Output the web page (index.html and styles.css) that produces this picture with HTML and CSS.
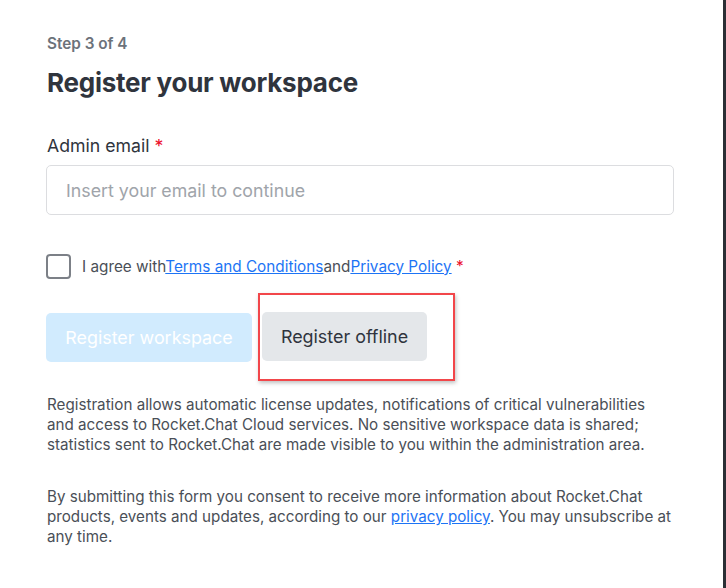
FILE: index.html
```html
<!DOCTYPE html>
<html>
<head>
<meta charset="utf-8">
<link rel="stylesheet" href="styles.css">
</head>
<body>
<div class="frame">
  <div class="form">
    <div class="step">Step 3 of 4</div>
    <h1 class="title">Register your workspace</h1>
    <label class="label">Admin email <span class="req">*</span></label>
    <div class="input">Insert your email to continue</div>
    <div class="agree">
      <span class="checkbox"></span>
      <span class="agree-text">I agree with<a class="link">Terms and Conditions</a>and<a class="link">Privacy Policy</a> <span class="req">*</span></span>
    </div>
    <div class="actions">
      <button class="btn btn-primary">Register workspace</button>
      <div class="highlight">
        <button class="btn btn-secondary">Register offline</button>
      </div>
    </div>
    <p class="text">Registration allows automatic license updates, notifications of critical vulnerabilities and access to Rocket.Chat Cloud services. No sensitive workspace data is shared; statistics sent to Rocket.Chat are made visible to you within the administration area.</p>
    <p class="text">By submitting this form you consent to receive more information about Rocket.Chat products, events and updates, according to our <a class="link">privacy policy</a>. You may unsubscribe at any time.</p>
  </div>
</div>
</body>
</html>
```
FILE: styles.css
```css
html, body {
  margin: 0;
  padding: 0;
  background: #ffffff;
}
body {
  font-family: Inter, "Noto Sans", sans-serif;
  color: #2f343d;
}
.frame {
  width: 723px;
  height: 588px;
  border-right: 3px solid #2b2f35;
  box-sizing: content-box;
  overflow: hidden;
}
.form {
  padding: 34px 52px 0 47px;
  width: 627px;
}
.step {
  font-size: 15.3px;
  line-height: 20px;
  font-weight: 600;
  color: #6c727a;
}
.title {
  margin: 11px 0 0;
  font-size: 26px;
  line-height: 36px;
  font-weight: 700;
  color: #2f343d;
  letter-spacing: -0.25px;
}
.label {
  display: block;
  margin-top: 33px;
  font-size: 17.7px;
  line-height: 24px;
  color: #2f343d;
}
.req {
  color: #ec0d2a;
}
.input {
  margin-top: 7px;
  height: 50px;
  box-sizing: border-box;
  border: 1px solid #dcdde0;
  border-radius: 5px;
  padding: 0 19px;
  display: flex;
  align-items: center;
  font-size: 17.8px;
  color: #a0a4aa;
  margin-left: -1px;
}
.agree {
  margin-top: 39px;
  display: flex;
  align-items: center;
  gap: 11px;
  margin-left: -1px;
}
.checkbox {
  width: 25px;
  height: 25px;
  box-sizing: border-box;
  border: 2px solid #7c8087;
  border-radius: 4px;
}
.agree-text {
  font-size: 15.3px;
  line-height: 20px;
  color: #4a4f57;
}
.link {
  color: #1d74f5;
  text-decoration: underline;
}
.actions {
  margin-top: 14px;
  display: flex;
  align-items: center;
  gap: 6px;
  margin-left: -1px;
}
.btn {
  font-family: inherit;
  font-size: 17.9px;
  height: 49px;
  border: none;
  border-radius: 5px;
  padding: 0 12px;
}
.btn-primary {
  background: #d1ebfe;
  color: #ffffff;
  width: 206px;
}
.highlight {
  border: 2px solid #f2464a;
  padding: 17px 26px 18px 2px;
  box-shadow: 1px 2px 4px rgba(0, 0, 0, 0.25);
}
.btn-secondary {
  background: #e4e7ea;
  color: #2f343d;
  width: 165px;
}
.text {
  margin: 14px 1px 0 0;
  font-size: 15.2px;
  line-height: 20px;
  color: #4a4f57;
}
.text + .text {
  margin-top: 32px;
}
```
